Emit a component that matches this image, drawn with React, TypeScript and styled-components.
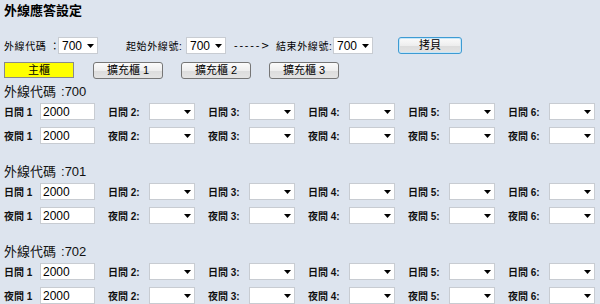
import React from "react";
import styled, { createGlobalStyle } from "styled-components";

const Global = createGlobalStyle`
  html, body { margin: 0; padding: 0; background: #dde4ee; }
  body {
    font-family: "Liberation Sans", "Noto Sans CJK TC", sans-serif;
    color: #000;
    width: 600px;
    height: 304px;
    overflow: hidden;
  }
`;

const Page = styled.div`
  padding: 1px 0 0 4px;
  display: flex;
  flex-direction: column;
`;

const Title = styled.h1`
  margin: 0;
  font-size: 13px;
  font-weight: bold;
  line-height: 18px;
  height: 18px;
  font-family: "Noto Sans CJK TC", sans-serif;
`;

const TopRow = styled.div`
  display: flex;
  align-items: center;
  height: 17px;
  margin-top: 18px;
`;

const SmallLabel = styled.span<{ $ml?: number; $w?: number }>`
  font-family: "Liberation Sans", "Noto Sans CJK TC", sans-serif;
  font-size: 10px;
  white-space: nowrap;
  margin-left: ${(p) => p.$ml ?? 0}px;
  ${(p) => (p.$w ? `width: ${p.$w}px;` : "")}
  letter-spacing: 0.6px;
  flex: none;
`;

const SelectWrap = styled.div<{ $w: number; $ml?: number }>`
  position: relative;
  flex: none;
  width: ${(p) => p.$w}px;
  height: 17px;
  margin-left: ${(p) => p.$ml ?? 0}px;
  background: #fff;
  box-sizing: border-box;
  border: 1px solid #c8ccd2;
`;

const NativeSelect = styled.select`
  appearance: none;
  -webkit-appearance: none;
  border: none;
  outline: none;
  background: transparent;
  width: 100%;
  height: 100%;
  padding: 0 0 0 3px;
  margin: 0;
  font-family: "Liberation Sans", sans-serif;
  font-size: 12px;
  color: #000;
  display: block;
`;

const Arrow = styled.svg`
  position: absolute;
  right: 3px;
  top: 6px;
  pointer-events: none;
`;

const Select: React.FC<{ w: number; ml?: number; value?: string }> = ({
  w,
  ml,
  value,
}) => (
  <SelectWrap $w={w} $ml={ml}>
    <NativeSelect defaultValue={value ?? ""}>
      <option value={value ?? ""}>{value ?? ""}</option>
    </NativeSelect>
    <Arrow width="7" height="4" viewBox="0 0 7 4">
      <path d="M0 0H7L3.5 4Z" fill="#000" />
    </Arrow>
  </SelectWrap>
);

const Dashes = styled.span`
  font-family: "DejaVu Sans", sans-serif;
  font-size: 10px;
  margin-left: 8px;
  width: 36px;
  letter-spacing: 1.8px;
  white-space: nowrap;
  flex: none;
`;

const Button = styled.button<{ $ml?: number; $w: number; $variant?: "main" | "copy" }>`
  flex: none;
  width: ${(p) => p.$w}px;
  height: ${(p) => (p.$variant === "main" ? 16 : 17)}px;
  margin-left: ${(p) => p.$ml ?? 0}px;
  padding: 0;
  box-sizing: border-box;
  font-family: "Liberation Sans", "Noto Sans CJK TC", sans-serif;
  font-size: 11px;
  line-height: 1;
  color: #000;
  border-radius: ${(p) => (p.$variant === "main" ? 0 : 3)}px;
  border: 1px solid
    ${(p) =>
      p.$variant === "main" ? "#8a8a8a" : p.$variant === "copy" ? "#3d9bd3" : "#767676"};
  background: ${(p) =>
    p.$variant === "main"
      ? "#ffff00"
      : "linear-gradient(#fbfbfb 0%, #eeeeee 50%, #dcdcdc 51%, #e4e4e4 100%)"};
  ${(p) => (p.$variant === "copy" ? "box-shadow: inset 0 0 0 1px #c6e6f8;" : "")}
`;

const ButtonRow = styled.div`
  display: flex;
  align-items: flex-start;
  margin-top: 8px;
  height: 17px;
`;

const Section = styled.section<{ $mt: number }>`
  display: flex;
  flex-direction: column;
  margin-top: ${(p) => p.$mt}px;
`;

const SectionHeader = styled.div`
  font-family: "Liberation Sans", "Noto Sans CJK TC", sans-serif;
  font-size: 13px;
  height: 20px;
  line-height: 20px;
  color: #111;
  margin-bottom: 1px;
`;

const HeaderCode = styled.span`
  margin-left: 5px;
`;

const Rows = styled.div`
  display: flex;
  flex-direction: column;
  gap: 7px;
`;

const Row = styled.div`
  display: flex;
  height: 17px;
`;

const Cell = styled.div<{ $first?: boolean }>`
  display: flex;
  align-items: center;
  width: 100px;
  flex: none;
  padding-left: ${(p) => (p.$first ? 0 : 4)}px;
  box-sizing: border-box;
`;

const CellLabel = styled.span<{ $w: number }>`
  font-size: 10px;
  font-weight: bold;
  width: ${(p) => p.$w}px;
  flex: none;
  white-space: nowrap;
  font-family: "Liberation Sans", "Noto Sans CJK TC", sans-serif;
  color: #111;
`;

const TextInput = styled.input`
  width: 55px;
  height: 17px;
  box-sizing: border-box;
  border: 1px solid #c8ccd2;
  background: #fff;
  padding: 0 0 0 2px;
  margin: 0;
  font-family: "Liberation Sans", sans-serif;
  font-size: 12px;
  color: #000;
  outline: none;
  flex: none;
`;

const codes = ["700", "701", "702"];
const kinds = ["日間", "夜間"];

const Zone: React.FC<{ code: string; mt: number }> = ({ code, mt }) => (
  <Section $mt={mt}>
    <SectionHeader>
      外線代碼<HeaderCode>:{code}</HeaderCode>
    </SectionHeader>
    <Rows>
      {kinds.map((k) => (
        <Row key={k}>
          <Cell $first>
            <CellLabel $w={36}>{k} 1</CellLabel>
            <TextInput defaultValue="2000" />
          </Cell>
          {[2, 3, 4, 5, 6].map((n) => (
            <Cell key={n}>
              <CellLabel $w={41}>
                {k} {n}:
              </CellLabel>
              <Select w={46} />
            </Cell>
          ))}
        </Row>
      ))}
    </Rows>
  </Section>
);

export default function App() {
  return (
    <Page>
      <Global />
      <Title>外線應答設定</Title>
      <TopRow>
        <SmallLabel $w={54}>外線代碼 ：</SmallLabel>
        <Select w={40} value="700" />
        <SmallLabel $ml={28} $w={57}>起始外線號:</SmallLabel>
        <Select w={40} ml={3} value="700" />
        <Dashes>-----&gt;</Dashes>
        <SmallLabel $ml={6} $w={54}>結束外線號:</SmallLabel>
        <Select w={40} ml={3} value="700" />
        <Button $w={64} $ml={25} $variant="copy">
          拷貝
        </Button>
      </TopRow>
      <ButtonRow>
        <Button $w={70} $variant="main">
          主櫃
        </Button>
        <Button $w={70} $ml={19}>
          擴充櫃 1
        </Button>
        <Button $w={70} $ml={18}>
          擴充櫃 2
        </Button>
        <Button $w={70} $ml={18}>
          擴充櫃 3
        </Button>
      </ButtonRow>
      {codes.map((c, i) => (
        <Zone key={c} code={c} mt={i === 0 ? 3 : 18} />
      ))}
    </Page>
  );
}
